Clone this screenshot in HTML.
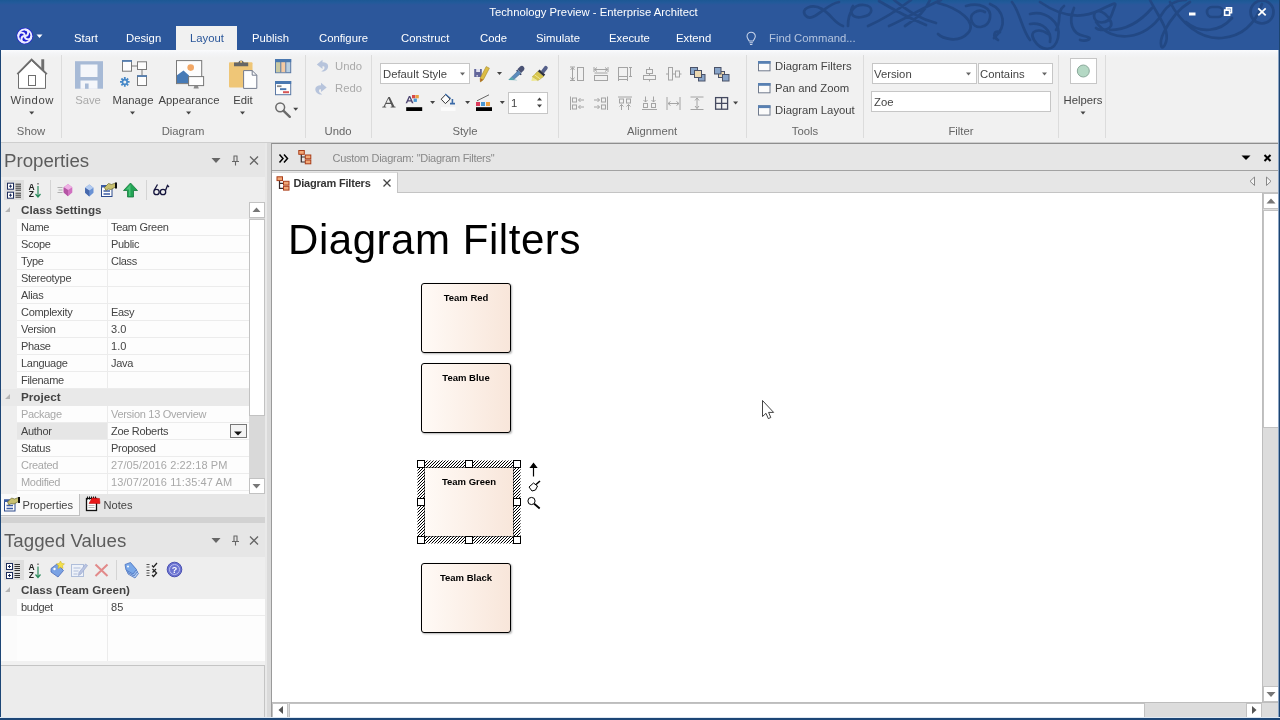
<!DOCTYPE html>
<html><head><meta charset="utf-8"><title>Technology Preview - Enterprise Architect</title>
<style>
*{box-sizing:border-box;margin:0;padding:0}
html,body{width:1280px;height:720px;overflow:hidden;background:#f1f1f1;font-family:"Liberation Sans",sans-serif;font-size:11.3px;color:#444}
.a{position:absolute}
.t{position:absolute;white-space:nowrap;line-height:14px}
.c{transform:translateX(-50%)}
#title{left:0;top:0;width:1280px;height:50px;background:linear-gradient(#1c5894 0,#225a9a 2.500px,#2c579b 5px)}
#title .t{color:#fff}
#ribbon{left:0;top:50px;width:1280px;height:93px;background:linear-gradient(#fbfcfe 0,#f4f5f7 3px,#f1f1f1 8px);border-bottom:1px solid #cecece}
.sep{position:absolute;top:5px;width:1px;height:83px;background:#dcdcdc}
.gl{top:74px;color:#666}
.dis{color:#aaa}
.box{position:absolute;background:#fff;border:1px solid #c6c6c6}
svg{position:absolute;overflow:visible}

#left{left:0;top:0;width:265px;height:720px}
.phead{position:absolute;left:0;width:265px;height:34px;background:#e6e6e6}
.ptitle{position:absolute;left:4px;font-size:18.7px;line-height:22px;color:#5c5c5c;white-space:nowrap}
.ptool{position:absolute;left:0;width:265px;height:25px;background:#eee}
.selic{position:absolute;left:4px;top:3px;width:20px;height:20px;background:#dedede}
.ghead{position:absolute;left:0;width:249px;height:17px;background:#eee;color:#444;line-height:16px;white-space:nowrap;font-size:11.7px}
.ghead b{position:absolute;left:21px;top:0}
.grow{position:absolute;left:17px;width:232px;height:17px;background:#fdfdfd;border-bottom:1px solid #ececec;color:#444;line-height:16px;white-space:nowrap;font-size:11px;letter-spacing:-.3px}
.grow .gn{position:absolute;left:4px;top:0}
.grow .gv{position:absolute;left:90px;top:0;width:142px;height:16px;border-left:1px solid #ececec;padding-left:3px}
.gdis{color:#a8a8a8}
.gsel .gn{left:0;padding-left:4px;width:90px;background:#e6e6e6;height:16px}
.gbtn{position:absolute;left:213px;top:1px;width:17px;height:14px;border:1px solid #777;background:#f4f4f4}
.sb{position:absolute;left:0;width:16px;background:#fff;border:1px solid #c2c2c2}
.sbh{position:absolute;top:0;height:15px;background:#fff;border:1px solid #c2c2c2}
.cb{position:absolute;width:90px;height:70px;border:1px solid #000;border-radius:3px;background:linear-gradient(90deg,#fffaf6,#f8e6da);text-align:center;font-size:9.5px;color:#000;line-height:13px;padding-top:7px;box-shadow:1px 1px 2px rgba(0,0,0,.3)}
#wrap{position:absolute;left:0;top:0;width:1280px;height:720px;will-change:transform}
</style></head><body><div id="wrap">
<div id="title" class="a">
 <div class="t c" style="left:593.5px;top:5px">Technology Preview - Enterprise Architect</div>
 <div class="a" style="left:176px;top:26px;width:61px;height:24px;background:#f1f1f1"></div>
 <div class="t" style="left:74px;top:31px">Start</div>
 <div class="t" style="left:126px;top:31px">Design</div>
 <div class="t" style="left:190px;top:31px;color:#2b579a">Layout</div>
 <div class="t" style="left:252px;top:31px">Publish</div>
 <div class="t" style="left:319px;top:31px">Configure</div>
 <div class="t" style="left:401px;top:31px">Construct</div>
 <div class="t" style="left:480px;top:31px">Code</div>
 <div class="t" style="left:536px;top:31px">Simulate</div>
 <div class="t" style="left:609px;top:31px">Execute</div>
 <div class="t" style="left:676px;top:31px">Extend</div>
 <div class="t" style="left:769px;top:31px;color:#b4c4de">Find Command...</div>
</div>
<div id="ribbon" class="a">
 <div class="sep" style="left:61px"></div>
 <div class="sep" style="left:305px"></div>
 <div class="sep" style="left:371px"></div>
 <div class="sep" style="left:558px"></div>
 <div class="sep" style="left:746px"></div>
 <div class="sep" style="left:863px"></div>
 <div class="sep" style="left:1058px"></div>
 <div class="sep" style="left:1105px"></div>
 <div class="t c" style="left:32.2px;top:43px;letter-spacing:.55px">Window</div>
 <div class="t c gl" style="left:31px">Show</div>
 <div class="t c dis" style="left:88px;top:43px">Save</div>
 <div class="t c" style="left:133px;top:43px">Manage</div>
 <div class="t c" style="left:189px;top:43px">Appearance</div>
 <div class="t c" style="left:243px;top:43px">Edit</div>
 <div class="t c gl" style="left:183px">Diagram</div>
 <div class="t dis" style="left:335px;top:9px">Undo</div>
 <div class="t dis" style="left:335px;top:31px">Redo</div>
 <div class="t c gl" style="left:338px">Undo</div>
 <div class="box" style="left:380px;top:13px;width:90px;height:21px"></div>
 <div class="t" style="left:383px;top:17px">Default Style</div>
 <div class="box" style="left:508px;top:42px;width:40px;height:22px"></div>
 <div class="t" style="left:511px;top:46px">1</div>
 <div class="t c gl" style="left:465px">Style</div>
 <div class="t c gl" style="left:652px">Alignment</div>
 <div class="t" style="left:775px;top:9px">Diagram Filters</div>
 <div class="t" style="left:775px;top:31px">Pan and Zoom</div>
 <div class="t" style="left:775px;top:53px">Diagram Layout</div>
 <div class="t c gl" style="left:805px">Tools</div>
 <div class="box" style="left:872px;top:13px;width:105px;height:21px"></div>
 <div class="t" style="left:874px;top:17px">Version</div>
 <div class="box" style="left:978px;top:13px;width:75px;height:21px"></div>
 <div class="t" style="left:980px;top:17px">Contains</div>
 <div class="box" style="left:871px;top:41px;width:180px;height:21px"></div>
 <div class="t" style="left:874px;top:45px">Zoe</div>
 <div class="t c gl" style="left:961px">Filter</div>
 <div class="box" style="left:1070px;top:8px;width:27px;height:26px"></div>
 <div class="t c" style="left:1083px;top:43px">Helpers</div>
</div>

<div id="left" class="a">
 <div class="phead" style="top:143px"><span class="ptitle" style="top:7px">Properties</span></div>
 <div class="ptool" style="top:177px"><div class="selic"></div></div>
 <div class="a" style="left:0;top:202px;width:17px;height:292px;background:#eee"></div><div class="a" style="left:0;top:599px;width:17px;height:17px;background:#eee"></div>
 <div class="ghead" style="top:202px"><span class="tw"></span><b>Class Settings</b></div>
 <div class="grow" style="top:219px"><span class="gn">Name</span><span class="gv">Team Green</span></div>
 <div class="grow" style="top:236px"><span class="gn">Scope</span><span class="gv">Public</span></div>
 <div class="grow" style="top:253px"><span class="gn">Type</span><span class="gv">Class</span></div>
 <div class="grow" style="top:270px"><span class="gn">Stereotype</span><span class="gv"></span></div>
 <div class="grow" style="top:287px"><span class="gn">Alias</span><span class="gv"></span></div>
 <div class="grow" style="top:304px"><span class="gn">Complexity</span><span class="gv">Easy</span></div>
 <div class="grow" style="top:321px"><span class="gn">Version</span><span class="gv" style="letter-spacing:.1px">3.0</span></div>
 <div class="grow" style="top:338px"><span class="gn">Phase</span><span class="gv" style="letter-spacing:.1px">1.0</span></div>
 <div class="grow" style="top:355px"><span class="gn">Language</span><span class="gv">Java</span></div>
 <div class="grow" style="top:372px"><span class="gn">Filename</span><span class="gv"></span></div>
 <div class="ghead" style="top:389px;background:#e9e9e9"><span class="tw"></span><b>Project</b></div>
 <div class="grow gdis" style="top:406px"><span class="gn">Package</span><span class="gv">Version 13 Overview</span></div>
 <div class="grow gsel" style="top:423px"><span class="gn">Author</span><span class="gv">Zoe Roberts</span><span class="gbtn"></span></div>
 <div class="grow" style="top:440px"><span class="gn">Status</span><span class="gv">Proposed</span></div>
 <div class="grow gdis" style="top:457px"><span class="gn">Created</span><span class="gv" style="letter-spacing:.1px">27/05/2016 2:22:18 PM</span></div>
 <div class="grow gdis" style="top:474px"><span class="gn">Modified</span><span class="gv" style="letter-spacing:.1px">13/07/2016 11:35:47 AM</span></div>
 <div class="a" style="left:0;top:491px;width:265px;height:3px;background:#eee"></div><div class="a" style="left:17px;top:491px;width:232px;height:3px;background:#fdfdfd"><div class="a" style="left:90px;top:0;width:1px;height:3px;background:#ececec"></div></div>
 <div class="a vs" style="left:249px;top:202px;width:16px;height:292px;background:#d9d9d9">
   <div class="sb" style="top:0;height:16px"></div>
   <div class="sb" style="top:17px;height:197px"></div>
   <div class="sb" style="top:276px;height:16px"></div>
 </div>
 <div class="a" style="left:0;top:494px;width:265px;height:24px;background:#e6e6e6"></div>
 <div class="a" style="left:0;top:494px;width:80px;height:22px;background:#fafafa;border-right:1px solid #c0c0c0;border-bottom:1px solid #c0c0c0"></div>
 <div class="t" style="left:22.5px;top:498px;color:#444;font-size:11.1px">Properties</div>
 <div class="t" style="left:103.5px;top:498px;color:#444;font-size:11.1px">Notes</div>
 <div class="a" style="left:0;top:517px;width:265px;height:6px;background:#d2d2d2"></div>
 <div class="phead" style="top:523px"><span class="ptitle" style="top:7px">Tagged Values</span></div>
 <div class="ptool" style="top:557px"><div class="selic"></div></div>
 <div class="ghead" style="top:582px;width:265px"><span class="tw"></span><b>Class (Team Green)</b></div>
 <div class="grow" style="top:599px;width:248px"><span class="gn">budget</span><span class="gv" style="letter-spacing:.1px">85</span></div>
 <div class="a" style="left:17px;top:616px;width:248px;height:45px;background:#fdfdfd"><div class="a" style="left:90px;top:0;width:1px;height:45px;background:#ececec"></div></div>
 <div class="a" style="left:0;top:616px;width:17px;height:45px;background:#fbfbfb"></div>
 <div class="a" style="left:0;top:665px;width:265px;height:53px;background:#ececec;border:1px solid #c4c4c4;border-bottom:none"></div>
</div>
<div id="doc" class="a">
 <div class="a" style="left:265px;top:143px;width:2px;height:577px;background:#e9e9e9"></div><div class="a" style="left:267px;top:143px;width:4px;height:577px;background:#dadada"></div>
 <div class="a" style="left:271px;top:143px;width:1009px;height:577px;background:#e6e6e6;border-left:1px solid #9a9a9a;border-top:1px solid #8e8e8e"></div>
 <div class="a" style="left:272px;top:170px;width:1008px;height:1px;background:#a2a2a2"></div>
 <div class="a" style="left:272px;top:192px;width:1008px;height:1px;background:#c4c4c4"></div>
 <div class="a" style="left:272px;top:172px;width:126px;height:21px;background:#fff;border-right:1px solid #c4c4c4;border-top:1px solid #d8d8d8"></div>
 <div class="t" style="left:332.5px;top:151px;color:#888;font-size:11px;letter-spacing:-.28px">Custom Diagram: "Diagram Filters"</div>
 <div class="t" style="left:293.5px;top:176px;color:#333;font-weight:bold;font-size:11px;letter-spacing:-.2px">Diagram Filters</div>
 <div class="a" style="left:272px;top:193px;width:991px;height:509px;background:#fff"></div>
 <div class="t" style="left:288px;top:216px;font-size:42px;line-height:48px;letter-spacing:.55px;color:#000">Diagram Filters</div>
 <div class="cb" style="left:421px;top:283px"><b>Team Red</b></div>
 <div class="cb" style="left:421px;top:363px"><b>Team Blue</b></div>
 <div class="cb" style="left:424px;top:467px;border-radius:0"><b>Team Green</b></div>
 <div class="cb" style="left:421px;top:563px"><b>Team Black</b></div>
 <div class="a" style="left:1262px;top:193px;width:17px;height:509px;background:#dcdcdc;border-left:1px solid #bdbdbd">
   <div class="sb" style="top:0;height:16px"></div>
   <div class="sb" style="top:17px;height:218px"></div>
   <div class="sb" style="top:493px;height:16px"></div>
 </div>
 <div class="a" style="left:272px;top:702px;width:1007px;height:16px;background:#dcdcdc;border-top:1px solid #bdbdbd">
   <div class="sbh" style="left:0;width:16px"></div>
   <div class="sbh" style="left:17px;width:856px"></div>
   <div class="sbh" style="left:974px;width:16px"></div>
 </div>
</div>
<div class="a" style="left:0;top:50px;width:1px;height:670px;background:#1d4676"></div>
<div class="a" style="left:1278px;top:50px;width:1px;height:670px;background:#8aa4c4"></div><div class="a" style="left:1279px;top:0;width:1px;height:720px;background:#1c4470"></div>
<div class="a" style="left:0;top:717px;width:1280px;height:1px;background:#dfe8f2"></div><div class="a" style="left:0;top:718px;width:1280px;height:2px;background:#1d4676"></div>
<svg id="ico" width="1280" height="720" viewBox="0 0 1280 720" style="left:0;top:0;pointer-events:none">
<g fill="none" stroke="#224884" stroke-width="2.7" stroke-linecap="round">
<path d="M839,2 C826,4 813,23 806,16 S 812,3 822,9 S 834,23 843,26"/>
<path d="M848,26 C848,12 854,4 864,5 S 874,15 862,17 S 850,10 853,6"/>
<path d="M868,26 C884,19 899,9 911,0 M879,1 C894,10 914,20 926,25 M894,0 C905,8 916,18 936,23 M889,26 C905,19 926,6 941,0 M905,26 C915,20 925,12 930,0"/>
<path d="M938,3 C958,8 978,22 968,33 S 942,38 938,34"/>
<path d="M985,12 C978,8 968,14 972,22 S 988,28 990,18 S 980,2 966,6"/>
<path d="M990,4 C1004,10 1008,26 994,38 M998,40 C992,36 994,30 1000,32"/>
<path d="M1012,2 C1020,12 1022,30 1030,40"/>
<path d="M1030,14 C1045,10 1062,22 1058,38 S 1040,50 1034,40 S 1040,28 1048,34"/>
<path d="M1030,24 C1042,22 1052,30 1050,42 M1064,6 C1056,12 1062,22 1056,30"/>
<path d="M1074,8 C1068,22 1072,34 1084,36 S 1086,42 1080,40"/>
<path d="M1040,2 C1060,16 1080,20 1100,10 S 1116,2 1112,14 S 1094,24 1094,16 S 1104,10 1110,20 S 1100,32 1096,28"/>
<path d="M1096,22 C1112,44 1146,40 1162,14 C1168,4 1176,0 1186,0"/>
<path d="M1110,30 C1125,30 1140,22 1152,8 M1150,0 C1158,16 1170,30 1166,42 S 1158,44 1164,32 S 1180,8 1190,2"/>
<path d="M1170,2 C1180,22 1200,40 1222,38 S 1256,22 1262,4"/>
<path d="M1186,22 C1200,34 1220,32 1232,18"/>
<rect x="1207" y="7" width="16" height="10" rx="5"/>
<circle cx="1262" cy="12" r="11.500"/>
</g>
<rect x="1189" y="12.5" width="6.5" height="3" fill="#fff"/>
<g fill="none" stroke="#fff" stroke-width="1.6"><path d="M1226.5,10 v-2.2 h5 v5 h-2.2"/><rect x="1224.6" y="10.2" width="5" height="5" /></g><rect x="1224" y="9.6" width="6.2" height="1.4" fill="#fff"/><rect x="1226" y="7" width="6" height="1.4" fill="#fff"/>
<path d="M1258.3,8.3 l7.4,7 M1265.7,8.3 l-7.4,7" stroke="#fff" stroke-width="1.8" fill="none"/>
<g transform="translate(24.8,36)"><circle r="8.3" fill="#2222d6"/><circle r="6.600" fill="none" stroke="#ececff" stroke-width="1.900"/><g fill="none" stroke="#ececff" stroke-width="1.900"><path d="M-6.500,0 C-6.500,-4.500 0,-4.500 0,0 S 6.500,4.500 6.500,0"/><path d="M0,-6.500 C4.500,-6.500 4.500,0 0,0 S -4.500,6.500 0,6.500"/></g></g>
<path d="M36.5,34.5 h6 l-3.0,3.5 z" fill="#fff"/>
<g fill="none" stroke="#c8d4ea" stroke-width="1.150" transform="translate(60.700,3.700) scale(.92)"><path d="M748.3,40.5 c-1,-2 -2.3,-2.8 -2.3,-5 a4.5,4.5 0 0 1 9,0 c0,2.2 -1.3,3 -2.3,5 z"/><path d="M748.6,42.5 h3.8 M749.2,44.3 h2.6"/></g>
<g><path d="M18.5,73.5 L31.6,60.5 L45.5,73.5 V88.4 H18.5 Z" fill="#fff" stroke="#6e6e6e" stroke-width="1"/>
<path d="M41.3,69 V59.3 H44.2 V72" fill="#6e6e6e"/>
<path d="M17.3,74.2 L31.6,59.6 L46.9,74.2" fill="none" stroke="#6e6e6e" stroke-width="1.8"/>
<rect x="28.5" y="75.5" width="7" height="10" fill="#fff" stroke="#6e6e6e" stroke-width="1"/></g>
<path d="M29.2,111.5 h5 l-2.5,3.0 z" fill="#444"/>
<g><rect x="75" y="61.2" width="28" height="27.5" fill="#a7bad6"/><rect x="80.5" y="64.5" width="17" height="12.5" fill="#f4f6fa"/><rect x="80.5" y="80.5" width="17" height="8.3" fill="#f4f6fa"/><rect x="85" y="83.5" width="3.6" height="5.3" fill="#a7bad6"/></g>
<g fill="#fdfdfd" stroke="#7a7a7a" stroke-width="1"><path d="M131.6,66 H137.2 M142,69.5 V75.5" fill="none"/>
<rect x="122.5" y="60.7" width="9" height="10.5"/><rect x="137.5" y="61.8" width="9" height="7.7"/><rect x="137.5" y="75.8" width="9" height="9.7"/></g>
<rect x="122" y="60.2" width="10" height="1.6" fill="#4a78b0"/><rect x="137" y="75.3" width="10" height="1.6" fill="#4a78b0"/>
<g transform="translate(124.8,81.9)"><g stroke="#4688c8" stroke-width="1.8"><path d="M0,-4.8V4.8M-4.8,0H4.8M-3.4,-3.4L3.4,3.4M-3.4,3.4L3.4,-3.4"/></g><circle r="3.1" fill="#4688c8"/><circle r="1.5" fill="#f1f1f1"/></g>
<path d="M130.0,111.5 h5 l-2.5,3.0 z" fill="#444"/>
<g><rect x="176.5" y="60.6" width="25.2" height="23" fill="#fdfdfd" stroke="#777" stroke-width="1"/>
<circle cx="190.7" cy="67.6" r="3.3" fill="#f2a765"/>
<path d="M177,83.1 V75.3 L183.5,70.6 L189,75.6 V83.1 Z" fill="#467ab6"/>
<rect x="188.6" y="76.6" width="15" height="9" fill="#fdfdfd" stroke="#777" stroke-width="1"/><path d="M194.3,86 h3.7 l.8,2.6 h-5.3 z" fill="#8a8a8a"/></g>
<path d="M186.1,111.5 h5 l-2.5,3.0 z" fill="#444"/>
<g><rect x="229" y="62.3" width="23.5" height="25.2" rx="1" fill="#efc677"/>
<path d="M234,66.2 v-3.6 h4.3 a2.9,2.9 0 0 1 5.6,0 h4.3 v3.6 z" fill="#666"/><circle cx="241.1" cy="61.8" r="1.1" fill="#efc677"/>
<path d="M243.6,70.6 h8.6 l4.6,4.6 v13.2 h-13.2 z" fill="#fefefe" stroke="#737a8c" stroke-width="1"/><path d="M252.2,70.6 v4.6 h4.6" fill="none" stroke="#737a8c" stroke-width="1"/></g>
<path d="M240.0,111.5 h5 l-2.5,3.0 z" fill="#444"/>
<g><rect x="275.5" y="59.5" width="15.2" height="13.2" fill="#b9cfe0" stroke="#5a78a4"/><rect x="276" y="62" width="4.8" height="10.2" fill="#c9c9a2"/><rect x="280.8" y="62" width="5" height="10.2" fill="#f3caa3"/><path d="M280.8,62v10.4M285.8,62v10.4" stroke="#5a78a4"/><rect x="275" y="59" width="16.2" height="3.2" fill="#4a78b0"/></g>
<g><rect x="275.5" y="81.5" width="15.2" height="13.2" fill="#fdfdfd" stroke="#5a78a4"/><rect x="275" y="81" width="16.2" height="3" fill="#4a78b0"/><rect x="277" y="85.3" width="4.5" height="1.8" fill="#888"/><rect x="280" y="88.2" width="6.3" height="1.9" fill="#4a78b0"/><rect x="283" y="91.2" width="6" height="2" fill="#d65555"/></g>
<g fill="none" stroke="#6a6a6a"><circle cx="280.2" cy="107.3" r="4.4" stroke-width="1.5"/><path d="M283.6,110.8 L289.8,116.8" stroke-width="2.4" stroke-linecap="round"/></g>
<path d="M293.2,107.7 h5 l-2.5,3.0 z" fill="#444"/>
<path d="M316.800,64.500 L322.500,59.800 L322.500,62.400 C327.800,62 329.400,66.200 327.200,69.200 C325.600,71.200 323,71.800 321.300,71.300 C324,70 325,68 324.400,66.900 C324,66 323.200,66.200 322.500,66.200 L322.500,69 Z" fill="#b7c4dc"/><g transform="translate(643.500,23) scale(-1,1)"><path d="M316.800,64.500 L322.500,59.800 L322.500,62.400 C327.800,62 329.400,66.200 327.200,69.200 C325.600,71.200 323,71.800 321.300,71.300 C324,70 325,68 324.400,66.900 C324,66 323.200,66.200 322.500,66.200 L322.500,69 Z" fill="#b7c4dc"/></g>
<path d="M460.0,72.5 h5 l-2.5,3.0 z" fill="#666"/>
<g><rect x="474.2" y="69" width="7.6" height="8" fill="#62669a"/><rect x="476.200" y="69" width="3.800" height="3" fill="#e4e4f0"/><rect x="476.400" y="75" width="1.600" height="1.600" fill="#c8c8dc"/>
<path d="M486.2,66.6 l3.2,1.6 l-6,11.5 l-3,2.2 l-.2,-3.8 z" fill="#dcbc44" stroke="#a58a2c" stroke-width=".6"/><path d="M480.300,78.200 l2.900,1.500 l-3,2.200 z" fill="#b06c28"/></g>
<path d="M497.0,72 h5 l-2.5,3.0 z" fill="#444"/>
<g><path d="M520.400,66.300 a2.700,2.700 0 0 1 3.700,3.700 l-3,3 l-3.700,-3.700 z" fill="#4a5274"/><path d="M516.600,70.200 l4.600,4.600" stroke="#3a4060" stroke-width="1.600"/><path d="M518.300,70.600 l2.600,2.600 l-6.800,6 l-2.400,-2.200 z" fill="#5c8cbc" stroke="#3e6088" stroke-width=".5"/><path d="M508.200,80 l3.200,-3.200 l2.800,2.600 l4,.8 z" fill="#56a4ae"/></g>
<g><path d="M544.200,66.800 a1.900,1.900 0 0 1 3.200,2.200 l-3.600,4.400 l-2.800,-2.400 z" fill="#55608a"/><path d="M539.400,69.600 l5.800,5 l-1.600,1.800 l-5.800,-5 z" fill="#2e3040"/><path d="M537.600,71.400 l6,5.200 l-5.800,4 l-5.600,-3.600 z" fill="#d8c64e" stroke="#a89a30" stroke-width=".5"/><path d="M532.200,77 l5.600,3.600 l-6.400,.4 z" fill="#eee890"/><path d="M534.500,74.800 l5.800,4.200" stroke="#f0e694" stroke-width="1"/></g>
<path d="M382.2,107.6 h4 v-.8 l-1.3,-.3 l1,-2.6 h5 l1,2.6 l-1.3,.3 v.8 h5 v-.8 l-1.2,-.3 l-4.6,-9.4 h-1.4 l-4.8,9.4 l-1.4,.3 z M386.4,102.7 l2,-4.3 l2,4.3 z" fill="#555" fill-rule="evenodd"/>
<g><path d="M405.6,103.3 l3.3,-7.3 h1.3 l3.3,7.3 h-1.6 l-.8,-1.9 h-3.2 l-.8,1.9 z M408.5,100.2 h2.2 l-1.1,-2.6 z" fill="#4c4470" fill-rule="evenodd"/>
<rect x="412" y="95" width="3.3" height="3.3" fill="#d84848"/><rect x="415.5" y="95" width="3.3" height="3.3" fill="#eaa040"/><rect x="413.6" y="98.6" width="3.3" height="3.3" fill="#4a98d4"/><rect x="406.2" y="107.2" width="16" height="3.8" fill="#000"/></g>
<path d="M430.1,101 h5 l-2.5,3.0 z" fill="#444"/>
<g><path d="M445.6,94.6 l4.4,4.6 l-4.6,4.4 l-4.2,-4.4 z" fill="#fdfdfd" stroke="#333" stroke-width="1"/><path d="M445.2,94 l5.6,4.6" stroke="#3a6aa8" stroke-width="1.2"/><path d="M452.4,99 v4 M450,103.6 h5" stroke="#3a6aa8" stroke-width="1.6" fill="none"/><rect x="441" y="107.2" width="14.5" height="3.8" fill="#fbfbfb"/></g>
<path d="M465.1,101 h5 l-2.5,3.0 z" fill="#444"/>
<g><path d="M477,100.8 L489,94.8" stroke="#666" stroke-width="1"/><rect x="476" y="102" width="4" height="4" fill="#dc3c5c"/><rect x="481" y="102" width="4" height="4" fill="#4a98d4"/><rect x="486" y="102" width="4" height="4" fill="#eea040"/><rect x="476" y="107.2" width="16" height="3.8" fill="#000"/></g>
<path d="M499.8,101 h5 l-2.5,3.0 z" fill="#444"/>
<path d="M537,100.6 l2.5,-3 l2.5,3 z M537,104.6 l2.5,3 l2.5,-3 z" fill="#444"/>
<g fill="none" stroke="#a4a4a4" stroke-width="1"><path d="M572.5,67.5 v12.5 M570.5,70 l2,-2.5 l2,2.5 M570.5,77.5 l2,2.5 l2,-2.5 M570,67 h5 M570,80.5 h5"/><rect x="577.5" y="67.5" width="6" height="13"/><path d="M594.5,69.5 h13 M597,67.5 l-2.5,2 l2.5,2 M605,67.5 l2.5,2 l-2.5,2 M594,67 v5 M608,67 v5"/><rect x="594.5" y="75.5" width="13" height="5"/><path d="M594.5,73 h13" /><rect x="618.5" y="67.5" width="9" height="9"/><path d="M618.5,76 v5 M627.5,76 v5 M618.5,79.5 h9 M630.5,67.5 v9 M629,67.5 h3 M629,76.5 h3"/><rect x="646.5" y="69.5" width="6" height="4"/><rect x="643.5" y="75.5" width="12" height="4"/><path d="M649.5,67 v2.5 M649.5,73.5 v2 M649.5,79.5 v2"/><rect x="668.5" y="67.5" width="4" height="12.5"/><rect x="675.5" y="71" width="4" height="6"/><path d="M666,74 h2.5 M672.5,74 h3 M679.5,74 h2"/><path d="M570.5,96.5 v13.5"/><rect x="572.5" y="98" width="4" height="4"/><rect x="572.5" y="105" width="4" height="4"/><path d="M584,100 h-5.5 l2,-2 m-2,2 l2,2 M584,107 h-5.5 l2,-2 m-2,2 l2,2"/><path d="M607.5,96.5 v13.5"/><rect x="601.5" y="98" width="4" height="4"/><rect x="601.5" y="105" width="4" height="4"/><path d="M594,100 h5.5 l-2,-2 m2,2 l-2,2 M594,107 h5.5 l-2,-2 m2,2 l-2,2"/><path d="M618,97 h14"/><rect x="619.5" y="99" width="4" height="4"/><rect x="626.5" y="99" width="4" height="4"/><path d="M621.5,110 v-5.5 l-2,2 m2,-2 l2,2 M628.5,110 v-5.5 l-2,2 m2,-2 l2,2"/><path d="M642,109.5 h15"/><rect x="643.5" y="103.500" width="4" height="4"/><rect x="651.5" y="103.5" width="4" height="4"/><path d="M645.5,96.500 v5.5 l-2,-2 m2,2 l2,-2 M653.5,96.500 v5.5 l-2,-2 m2,2 l2,-2"/><path d="M667,97 v13 M680,97 v13 M668,103.500 h11 M670.5,101.500 l-2.500,2 l2.500,2 M676.5,101.500 l2.500,2 l-2.500,2"/><path d="M690.5,97 h13 M690.5,109.5 h13 M697,98 v10.500 M695,100.500 l2,-2.500 l2,2.500 M695,106 l2,2.500 l2,-2.500"/></g>
<g stroke="#4a5268" stroke-width="1"><rect x="690.5" y="67.5" width="7" height="7" fill="#88a4c8"/><rect x="698.5" y="74.500" width="6.500" height="6.500" fill="#88a4c8"/><rect x="694.5" y="70.5" width="7" height="7" fill="#ecd8b0"/></g>
<g stroke="#4a5268" stroke-width="1"><rect x="718.5" y="71.500" width="6" height="6" fill="#ecd8b0"/><rect x="714.5" y="67.5" width="6.500" height="6.500" fill="#88a4c8"/><rect x="722.5" y="74.500" width="6.500" height="6.500" fill="#88a4c8"/></g>
<g fill="none" stroke="#454a60" stroke-width="1.3"><rect x="715.6" y="97.6" width="12" height="11.6"/><path d="M721.6,97.6 v11.600 M715.600,103.400 h12"/></g>
<path d="M733.1,101.5 h5 l-2.5,3.0 z" fill="#444"/>
<g><rect x="758.5" y="61.5" width="11.500" height="9.3" fill="#fbfbfb" stroke="#707a8c"/><rect x="758" y="61" width="12.500" height="2.800" fill="#5880b2"/></g>
<g><rect x="758.5" y="83.5" width="11.500" height="9.3" fill="#fbfbfb" stroke="#707a8c"/><rect x="758" y="83" width="12.500" height="2.800" fill="#5880b2"/></g>
<g><rect x="758.5" y="105.8" width="11.500" height="9.3" fill="#fbfbfb" stroke="#707a8c"/><rect x="758" y="105.3" width="12.500" height="2.800" fill="#5880b2"/></g>
<path d="M966.0,72.5 h5 l-2.5,3.0 z" fill="#666"/>
<path d="M1042.0,72.5 h5 l-2.5,3.0 z" fill="#666"/>
<circle cx="1083.3" cy="71" r="6" fill="#b4d8c4" stroke="#8aa89a" stroke-width="1"/>
<path d="M1080.5,111.5 h5 l-2.5,3.0 z" fill="#444"/>
<path d="M211.5,158.0 h9 l-4.500,5 z" fill="#666"/>
<g fill="none" stroke="#666" stroke-width="1.100"><path d="M233.500,156.0 h4 M234,156.0 v5.500 M237,156.0 v5.500 M232,161.5 h7 M235.500,161.5 v4"/></g>
<path d="M250,156.5 l8,8 M258,156.5 l-8,8" stroke="#666" stroke-width="1.300" fill="none"/>
<path d="M211.5,538.0 h9 l-4.500,5 z" fill="#666"/>
<g fill="none" stroke="#666" stroke-width="1.100"><path d="M233.500,536.0 h4 M234,536.0 v5.500 M237,536.0 v5.500 M232,541.5 h7 M235.500,541.5 v4"/></g>
<path d="M250,536.5 l8,8 M258,536.5 l-8,8" stroke="#666" stroke-width="1.300" fill="none"/>
<g><g fill="#fff" stroke="#1c2c5c" stroke-width="1"><rect x="7.5" y="183.2" width="6" height="6"/><rect x="7.5" y="192.2" width="6" height="6"/></g>
<path d="M9,186.2 h3 M10.5,184.7 v3 M9,195.2 h3 M10.5,193.7 v3" stroke="#1c2c5c" stroke-width="1"/>
<path d="M15.5,184.2 h5.500 M15.5,186.2 h5.500 M15.5,188.2 h5.500 M15.5,190.2 h5.500 M15.5,193.2 h5.500 M15.5,195.2 h5.500 M15.5,197.2 h5.500" stroke="#333" stroke-width="1"/></g>
<g><text x="28.5" y="189.5" font-family="Liberation Sans, sans-serif" font-size="8.500" font-weight="bold" fill="#222">A</text><text x="28.8" y="197.3" font-family="Liberation Sans, sans-serif" font-size="8.500" font-weight="bold" fill="#222">Z</text>
<path d="M38.0,186 v10.500 M35.5,194 l2.500,3 l2.500,-3" stroke="#2a8a5c" stroke-width="1.200" fill="none"/><path d="M38.0,183 v1.500" stroke="#333" stroke-width="1"/></g>
<g><g fill="#fff" stroke="#1c2c5c" stroke-width="1"><rect x="6.5" y="563.5" width="6" height="6"/><rect x="6.5" y="572.5" width="6" height="6"/></g>
<path d="M8,566.5 h3 M9.5,565 v3 M8,575.5 h3 M9.5,574 v3" stroke="#1c2c5c" stroke-width="1"/>
<path d="M14.5,564.5 h5.500 M14.5,566.5 h5.500 M14.5,568.5 h5.500 M14.5,570.5 h5.500 M14.5,573.5 h5.500 M14.5,575.5 h5.500 M14.5,577.5 h5.500" stroke="#333" stroke-width="1"/></g>
<g><text x="28.5" y="570.0" font-family="Liberation Sans, sans-serif" font-size="8.500" font-weight="bold" fill="#222">A</text><text x="28.8" y="577.8" font-family="Liberation Sans, sans-serif" font-size="8.500" font-weight="bold" fill="#222">Z</text>
<path d="M38.0,566.5 v10.500 M35.5,574.5 l2.500,3 l2.500,-3" stroke="#2a8a5c" stroke-width="1.200" fill="none"/><path d="M38.0,563.5 v1.500" stroke="#333" stroke-width="1"/></g>
<path d="M50.5,180 v20 M146.5,180 v20 M116.500,560 v20" stroke="#d4d4d4" stroke-width="1"/>
<g><path d="M57.500,187.500 h5 M58.500,190 h4 M57.500,192.500 h5" stroke="#b0b0b0" stroke-width="1"/><path d="M68,184 L72.300,187.300 V192.500 L68,196.300 L63.700,192.500 V187.300 Z" fill="#d070c0"/><path d="M68,184 L72.300,187.300 L68,190 L63.700,187.300 Z" fill="#eeb0e4"/><path d="M68,190 V196.300 L63.700,192.500 V187.300 Z" fill="#b454a4"/></g>
<g><path d="M89.300,184.600 L93.500,187.800 V192.800 L89.300,196.500 L85.100,192.800 V187.800 Z" fill="#6a92d4"/><path d="M89.300,184.600 L93.500,187.800 L89.300,190.400 L85.100,187.800 Z" fill="#b4ccf0"/><path d="M89.300,190.400 V196.500 L85.100,192.800 V187.800 Z" fill="#4668ac"/></g>
<g><rect x="101.5" y="185.5" width="10.500" height="11" fill="#fdfdfd" stroke="#2c4a8c" stroke-width="1"/><rect x="101" y="185" width="11.500" height="2.500" fill="#3c5ca4"/><path d="M103.5,191 h6.500 M103.5,194 h6.500" stroke="#3c5ca4" stroke-width="1.400"/>
<path d="M104.5,187.5 l4,-4 l3,1 l4,-1.500 v4 l-4.500,2.500 l-3,-.5 l-2,1.500 z" fill="#c8c070" stroke="#6a6830" stroke-width=".7"/><rect x="115" y="182.5" width="2" height="6" fill="#111"/></g>
<g><rect x="4.5" y="500.0" width="10.500" height="11" fill="#fdfdfd" stroke="#2c4a8c" stroke-width="1"/><rect x="4" y="499.5" width="11.500" height="2.500" fill="#3c5ca4"/><path d="M6.5,505.5 h6.500 M6.5,508.5 h6.500" stroke="#3c5ca4" stroke-width="1.400"/>
<path d="M7.5,502.0 l4,-4 l3,1 l4,-1.500 v4 l-4.500,2.500 l-3,-.5 l-2,1.500 z" fill="#c8c070" stroke="#6a6830" stroke-width=".7"/><rect x="18" y="497.0" width="2" height="6" fill="#111"/></g>
<path d="M130.500,183 l7,7.500 h-4 v6.500 h-6 v-6.500 h-4 z" fill="#22a455" stroke="#157a3c" stroke-width=".8"/><path d="M130.500,184.500 l-4.500,5 h3 v6.500 h1.500z" fill="#5cd088" opacity=".7"/>
<g fill="none" stroke="#14143c" stroke-width="1.300"><circle cx="156.500" cy="192" r="2.700"/><circle cx="163" cy="192" r="2.700"/><path d="M154,190.500 l3.500,-6 M165.500,190.500 l2,-5 l1.500,1.500"/></g>
<g><rect x="86.500" y="498.500" width="10" height="12" fill="#fdfdfd" stroke="#111" stroke-width="1.300"/><path d="M87.500,496.500 v3 M89.500,496.500 v3 M91.500,496.500 v3 M93.500,496.500 v3 M95.500,496.500 v3" stroke="#111" stroke-width="1"/><path d="M88.500,505.500 h6 M88.500,507.500 h6" stroke="#bbb" stroke-width="1"/><path d="M89,503.500 l3,-5.500 l7.500,0.500 l.5,5 z" fill="#e81818" stroke="#b00" stroke-width=".5"/></g>
<g><path d="M51,568.500 l6,-4.500 l6.500,6.500 l-5.500,6.500 l-7,-5 z" fill="#7aa2e4" stroke="#4a6ab8" stroke-width=".8"/><circle cx="54.500" cy="569" r="1.200" fill="#fff"/><path d="M60.500,561 l1.300,2.500 l2.700,.3 l-2,2 l.5,2.700 l-2.500,-1.300 l-2.500,1.300 l.5,-2.700 l-2,-2 l2.700,-.3 z" fill="#f4e04a" stroke="#c8b020" stroke-width=".5"/></g>
<g opacity=".9"><rect x="71.500" y="564.500" width="12" height="12" fill="#eef2fa" stroke="#a8b8d8"/><path d="M73.500,568 h7 M73.500,571 h5 M73.500,574 h4" stroke="#a8b8d8"/><path d="M85.500,564 l-6.500,8.500 l-.5,3 l2.500,-1.500 l6.500,-8.500 z" fill="#b4c0e0" stroke="#8a9ac8" stroke-width=".6"/></g>
<path d="M95.500,564.500 l12,11.500 M107.500,564.500 l-12,11.500" stroke="#e28a8a" stroke-width="2" fill="none"/>
<g stroke="#4a72c0" stroke-width=".8"><path d="M127,568.500 l5.500,-2 l6,7 l-3.500,4.500 l-7,-4 z" fill="#b8d0f0"/><path d="M126,566.500 l5.500,-2 l6,7 l-3.500,4.500 l-7,-4 z" fill="#9abcec"/><path d="M125,564.500 l5.500,-2 l6,7 l-3.500,4.500 l-7,-4 z" fill="#7aa8e8"/></g><circle cx="128" cy="566.500" r="1" fill="#fff"/>
<g stroke="#222" fill="none" stroke-width="1.200"><path d="M152,565.500 l1.500,1.500 l3.500,-4 M152.500,569 l3.500,3.500 M156,569 l-3.500,3.500 M152,575 l1.500,1.500 l3.500,-4"/><path d="M146.500,564.500 h3 M146.500,567 h3 M146.500,570.500 h3 M146.500,573 h3 M146.500,575.500 h3" stroke="#555"/></g>
<circle cx="174.500" cy="569.500" r="7.300" fill="#6a72d0" stroke="#4a50b0" stroke-width="1"/><circle cx="174.500" cy="569.500" r="5" fill="none" stroke="#b8bcf0" stroke-width="1"/><text x="174.500" y="573" text-anchor="middle" font-family="Liberation Sans, sans-serif" font-weight="bold" font-size="9" fill="#fff">?</text>
<path d="M10,207 v5 h-5 z M10,394 v5 h-5 z M10,587 v5 h-5 z" fill="#b4b4b4"/>
<path d="M252.500,212 l4,-4.500 l4,4.500 z M252.500,484 l4,4.500 l4,-4.500 z" fill="#777"/>
<path d="M234,431.500 h8 l-4,4 z" fill="#111"/>
<path d="M279.500,154.500 l3.500,4 l-3.500,4 M284,154.500 l3.500,4 l-3.500,4" stroke="#000" stroke-width="1.500" fill="none"/>
<g><path d="M301.3,154 v8 h4 M301.3,157 h4" stroke="#3a2a2a" stroke-width="1.200" fill="none"/><g fill="#f2a878" stroke="#a83c18" stroke-width="1"><rect x="298.8" y="150.5" width="5.500" height="3.800"/><rect x="305.3" y="155" width="5.500" height="3.800"/><rect x="305.3" y="160" width="5.500" height="3.800"/></g></g>
<g><path d="M279.5,180.3 v8 h4 M279.5,183.3 h4" stroke="#3a2a2a" stroke-width="1.200" fill="none"/><g fill="#f2a878" stroke="#a83c18" stroke-width="1"><rect x="277.0" y="176.8" width="5.500" height="3.800"/><rect x="283.5" y="181.3" width="5.500" height="3.800"/><rect x="283.5" y="186.3" width="5.500" height="3.800"/></g></g>
<path d="M383.500,179.500 l7,7 M390.500,179.500 l-7,7" stroke="#444" stroke-width="1.300" fill="none"/>
<path d="M1241.500,155.500 h9 l-4.500,4.500 z" fill="#000"/><path d="M1264.500,155 l6,6 M1270.500,155 l-6,6" stroke="#000" stroke-width="2" fill="none"/>
<path d="M1254.500,177 v8.500 l-4.500,-4.250 z M1266.500,177 v8.500 l4.500,-4.250 z" fill="#f4f4f4" stroke="#888" stroke-width="1"/>
<path d="M1266.500,203.500 l4.500,-5 l4.500,5 z M1266.500,692 l4.500,5 l4.500,-5 z" fill="#777"/>
<path d="M283,706 v8 l-4.500,-4 z M1252,706 v8 l4.500,-4 z" fill="#555"/>
<defs><pattern id="hatch" width="3" height="3" patternUnits="userSpaceOnUse"><rect width="3" height="3" fill="#fff"/><path d="M-1,1 l2,-2 M0,3 l3,-3 M2,4 l2,-2" stroke="#000" stroke-width="1"/></pattern></defs>
<path d="M417.500,460.500 h103 v83 h-103 z M424.500,467.500 v69 h89 v-69 z" fill="url(#hatch)" fill-rule="evenodd"/>
<g fill="#fff" stroke="#000" stroke-width="1"><rect x="417.5" y="460.5" width="7" height="7"/><rect x="417.5" y="498.5" width="7" height="7"/><rect x="417.5" y="536.5" width="7" height="7"/><rect x="465.5" y="460.5" width="7" height="7"/><rect x="465.5" y="536.5" width="7" height="7"/><rect x="513.5" y="460.5" width="7" height="7"/><rect x="513.5" y="498.5" width="7" height="7"/><rect x="513.5" y="536.5" width="7" height="7"/></g>
<path d="M533.500,476.500 v-12 M530.500,467.500 l3,-4 l3,4 z" stroke="#000" stroke-width="1.200" fill="#000"/>
<g fill="#fff" stroke="#000" stroke-width="1"><path d="M529,487 l4.500,-4 l4,3 l-2,4 l-3.500,1 z"/><path d="M536,484.500 l4,-3.500" stroke-width="1.600"/><circle cx="531.500" cy="501" r="3.600"/><path d="M534.200,503.800 l5.500,4.700" stroke-width="1.800"/></g>
<path d="M762.500,400.500 V416.500 L766,413.300 L768.300,418.600 L770.800,417.500 L768.600,412.400 H773.600 Z" fill="#fff" stroke="#222" stroke-width=".85"/>
</svg>
</div></body></html>
